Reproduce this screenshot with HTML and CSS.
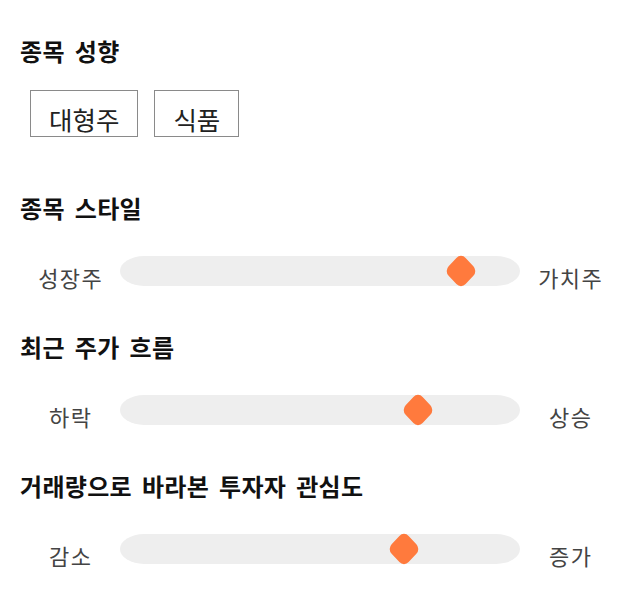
FILE: index.html
```html
<!DOCTYPE html>
<html lang="ko">
<head>
<meta charset="utf-8">
<link rel="stylesheet" href="styles.css">
</head>
<body>
<div class="page">
  <h2 class="title first">종목 성향</h2>
  <div class="tags">
    <span class="tag">대형주</span>
    <span class="tag">식품</span>
  </div>

  <h2 class="title">종목 스타일</h2>
  <div class="slider-row">
    <span class="end">성장주</span>
    <div class="track"><span class="thumb" style="left: 85.25%"></span></div>
    <span class="end">가치주</span>
  </div>

  <h2 class="title">최근 주가 흐름</h2>
  <div class="slider-row">
    <span class="end">하락</span>
    <div class="track"><span class="thumb" style="left: 74.5%"></span></div>
    <span class="end">상승</span>
  </div>

  <h2 class="title">거래량으로 바라본 투자자 관심도</h2>
  <div class="slider-row">
    <span class="end">감소</span>
    <div class="track"><span class="thumb" style="left: 71%"></span></div>
    <span class="end">증가</span>
  </div>
</div>
</body>
</html>
```
FILE: styles.css
```css
* { box-sizing: border-box; }
html, body { margin: 0; padding: 0; background: #fff; }
body {
  font-family: "Noto Sans CJK KR", "Noto Sans", sans-serif;
  color: #111;
}
.page {
  padding: 36px 20px 0 20px;
  width: 640px;
}
.title {
  margin: 40px 0 0 0;
  font-size: 24px;
  line-height: 30px;
  font-weight: 700;
  color: #111;
  letter-spacing: 0.3px;
  word-spacing: 3px;
}
.title.first { margin-top: 0; }
.tags {
  display: flex;
  gap: 16px;
  margin: 24px 0 0 10px;
}
.tag {
  display: inline-block;
  border: 1px solid #8a8a8a;
  font-size: 25.5px;
  line-height: 24px;
  padding: 16px 18px 5px;
  color: #222;
}
.tags + .title { margin-top: 56px; }
.slider-row {
  display: grid;
  grid-template-columns: 100px 400px 100px;
  align-items: start;
  margin-top: 33px;
}
.end {
  text-align: center;
  font-size: 22px;
  line-height: 30px;
  margin-top: 6px;
  color: #444;
  letter-spacing: 1.5px;
  text-indent: 1.5px;
}
.track {
  position: relative;
  height: 30px;
  background: #eeeeee;
  border-radius: 24px / 15px;
}
.thumb {
  position: absolute;
  top: 50%;
  width: 24px;
  height: 24px;
  margin-left: -12px;
  margin-top: -12px;
  background: #ff7a3d;
  border-radius: 6.5px;
  transform: scaleY(1.06) rotate(45deg);
}
```
